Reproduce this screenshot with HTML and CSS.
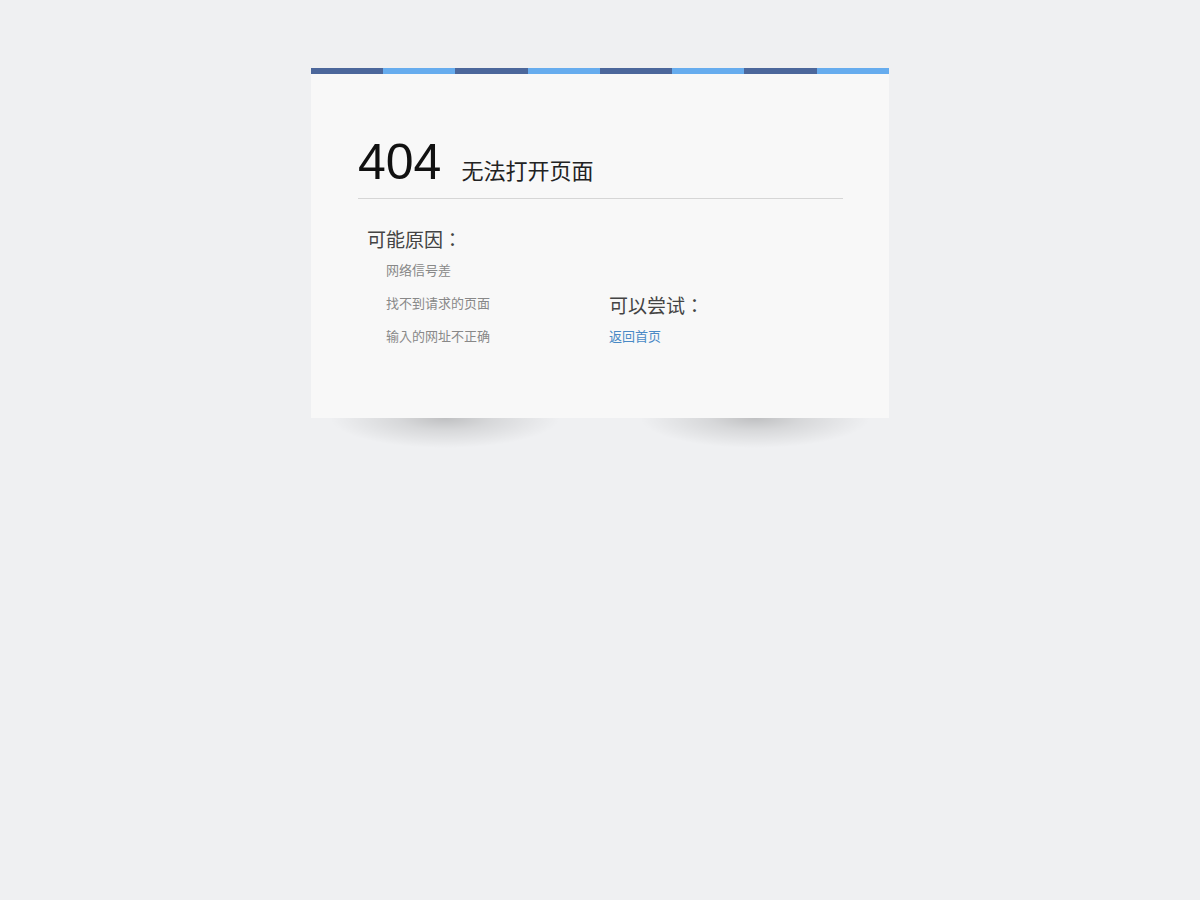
FILE: index.html
```html
<!DOCTYPE html>
<html>
<head>
  <meta charset="UTF-8" />
  <meta name="viewport" content="width=device-width, initial-scale=1" />
  <title>404 无法打开页面</title>
  <link rel="stylesheet" href="styles.css">
</head>
<body>

  <div class="error-box">
    <div class="stripe"></div>
    <div class="error-body">
      <h1 class="error-title">
        <span class="code">404</span>
        <span class="text">无法打开页面</span>
      </h1>

      <div class="error-info">
        <div class="reasons">
          <h3>可能原因：</h3>
          <ul>
            <li>网络信号差</li>
            <li>找不到请求的页面</li>
            <li>输入的网址不正确</li>
          </ul>
        </div>
        <div class="tries">
          <h3>可以尝试：</h3>
          <ul>
            <li><a href="#">返回首页</a></li>
          </ul>
        </div>
      </div>
    </div>
    <div class="error-shadow">
      <div class="shade shade-left"></div>
      <div class="shade shade-right"></div>
    </div>
  </div>

</body>
</html>
```

FILE: styles.css
```css
/* Reset */
* {
  box-sizing: border-box;
  margin: 0;
  padding: 0;
}

html {
  background: #eff0f2;
}

body {
  font-family: "Liberation Sans", "Noto Sans CJK JP", sans-serif;
  color: #333;
  padding-top: 68px;
}

.error-box {
  width: 578px;
  margin: 0 auto;
}

.stripe {
  height: 6px;
  background: linear-gradient(to right,
    #4c679b 0, #4c679b 12.5%,
    #66acee 12.5%, #66acee 25%,
    #4c679b 25%, #4c679b 37.5%,
    #66acee 37.5%, #66acee 50%,
    #4c679b 50%, #4c679b 62.5%,
    #66acee 62.5%, #66acee 75%,
    #4c679b 75%, #4c679b 87.5%,
    #66acee 87.5%, #66acee 100%);
}

.error-body {
  padding: 58px 46px 65px 47px;
  background: #f8f8f8;
}

/* lifted shadow under the box */
.error-shadow {
  display: flex;
  justify-content: space-between;
  height: 30px;
  padding: 0 17px;
}

.shade {
  width: 260px;
  height: 100%;
}

.shade-left {
  background: radial-gradient(ellipse 115px 30px at 117px 0, rgba(0, 0, 0, 0.2) 0, rgba(0, 0, 0, 0.1) 40%, rgba(0, 0, 0, 0) 100%);
}

.shade-right {
  background: radial-gradient(ellipse 115px 30px at 143px 0, rgba(0, 0, 0, 0.2) 0, rgba(0, 0, 0, 0.1) 40%, rgba(0, 0, 0, 0) 100%);
}

.error-title {
  font-weight: normal;
  height: 67px;
  border-bottom: 1px solid #d6d6d6;
  display: flex;
  align-items: baseline;
  line-height: 60px;
}

.error-title .code {
  font-size: 50px;
  color: #111;
  margin-right: 20px;
}

.error-title .text {
  font-size: 22px;
  color: #222;
}

.error-info {
  display: flex;
  margin-top: 29px;
}

.error-info h3 {
  font-size: 19px;
  font-weight: normal;
  line-height: 26px;
  color: #444;
}

.error-info ul {
  list-style: none;
}

.error-info li {
  font-size: 13px;
  line-height: 33px;
  color: #888;
}

.reasons {
  width: 251px;
  padding-left: 9px;
}

.reasons ul {
  padding-left: 19px;
}

.tries {
  align-self: flex-end;
}

.tries a {
  color: #4a8ac6;
  text-decoration: none;
}
```
